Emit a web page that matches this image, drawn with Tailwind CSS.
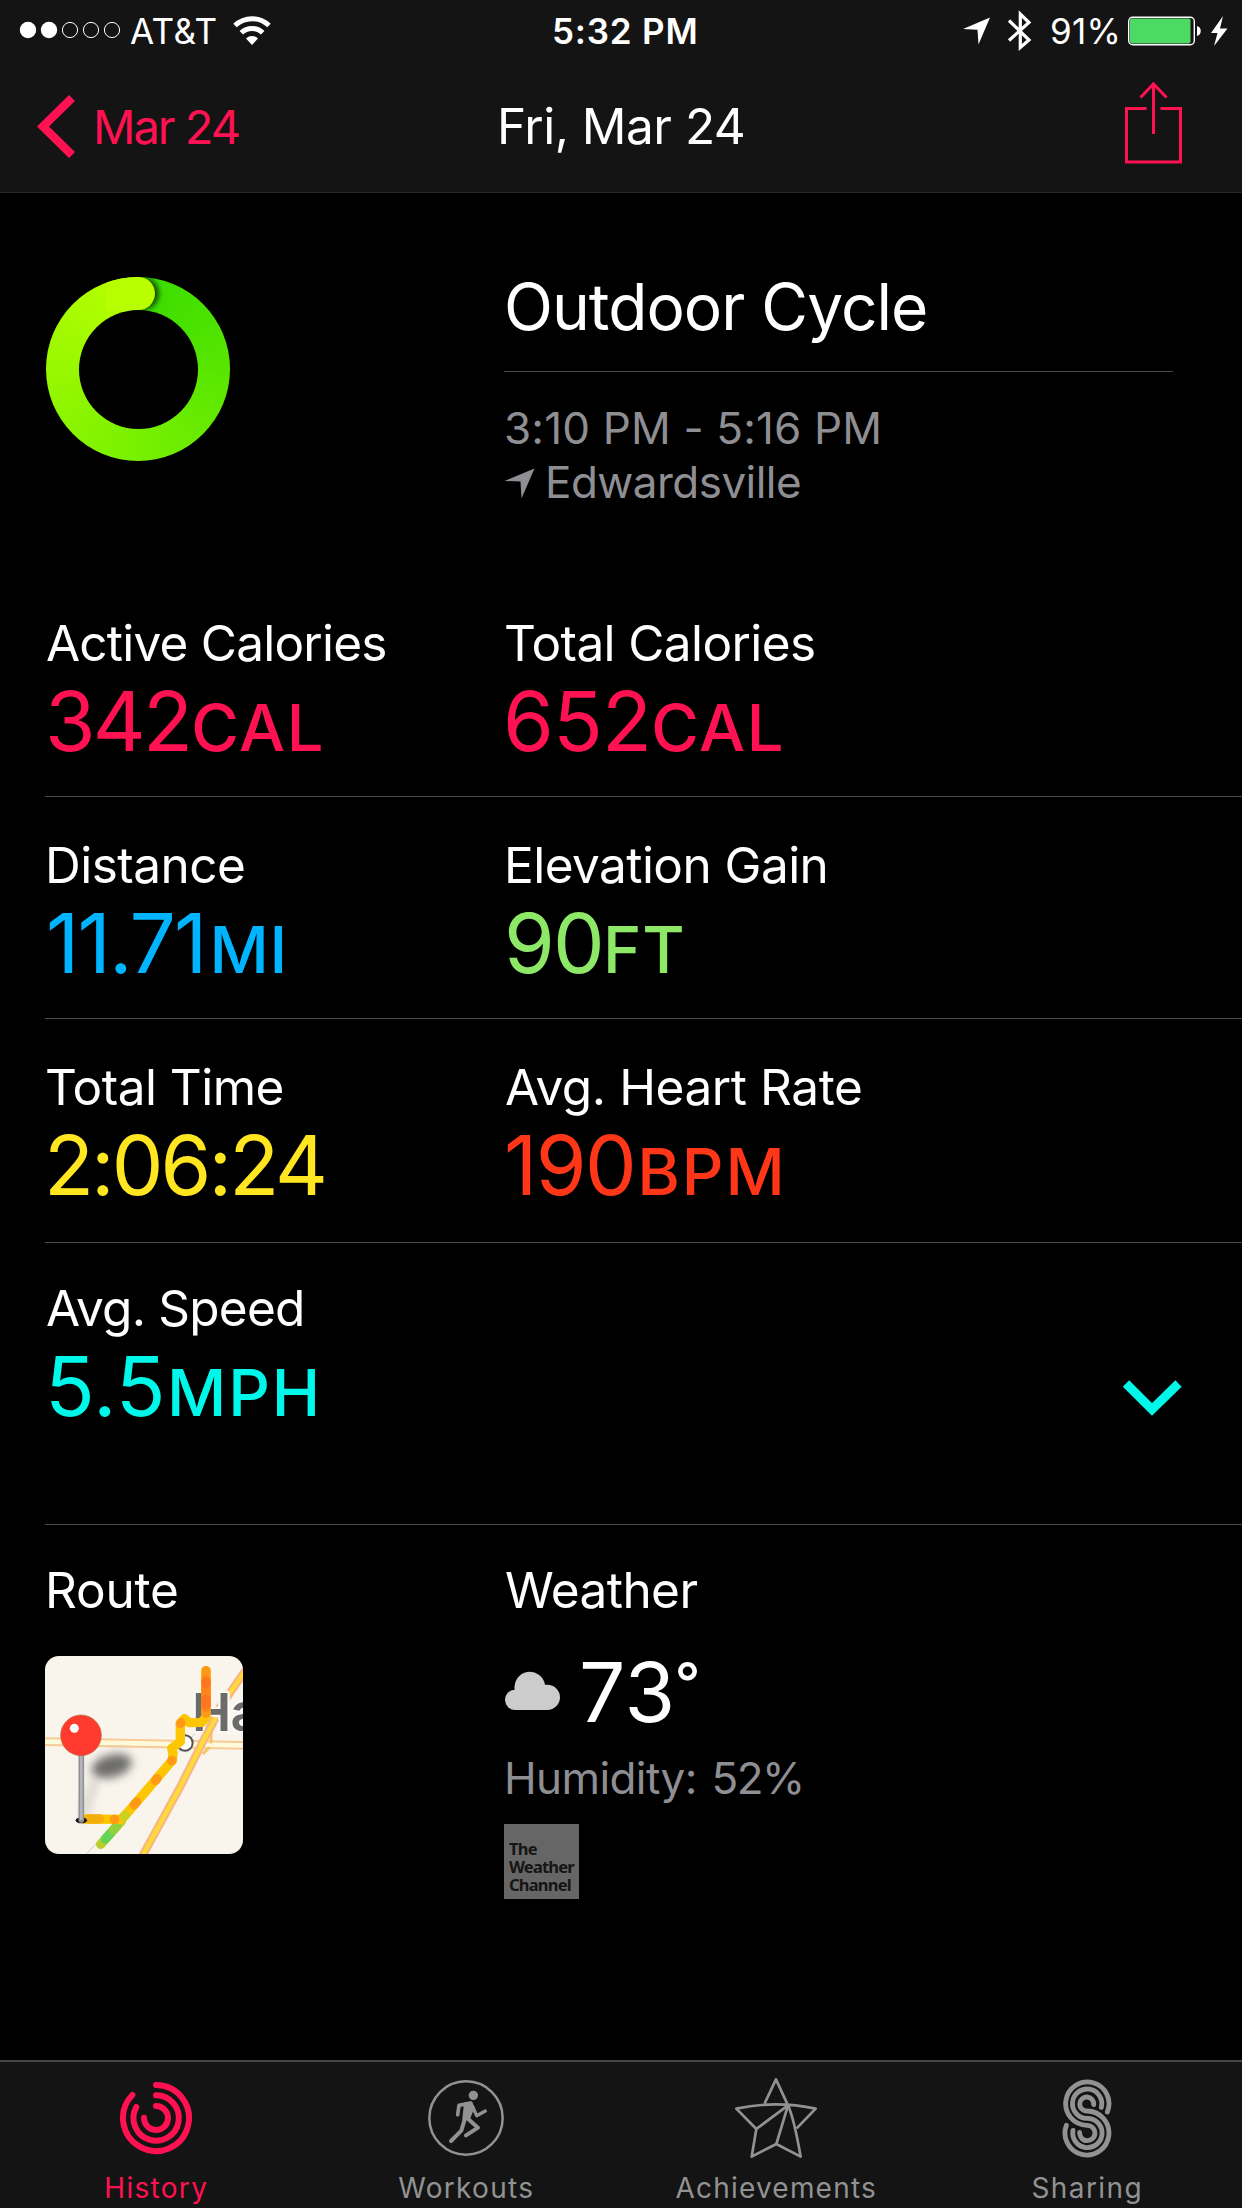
<!DOCTYPE html>
<html lang="en">
<head>
    <meta charset="UTF-8">
    <meta name="viewport" content="width=device-width, initial-scale=1.0">
    <title>Activity - Outdoor Cycle</title>
    <script src="https://cdn.jsdelivr.net/npm/@tailwindcss/browser@4"></script>
</head>
<body class="bg-black text-white font-['Inter',sans-serif] w-[1242px] h-[2208px] flex flex-col overflow-hidden">

    <!-- Header -->
    <header class="bg-[#141414] border-b border-[#2a2a2a] h-[193px] shrink-0">
        <div class="h-[62px] flex items-center text-[35px] leading-[62px]">
            <div class="w-[552px] flex items-center pl-[19px]">
                <svg class="w-[104px] h-[20px]" viewBox="0 0 104 20" fill="white">
                    <circle cx="9" cy="9" r="8.2"/>
                    <circle cx="30" cy="9" r="8.2"/>
                    <g fill="none" stroke="white" stroke-width="1">
                        <circle cx="51" cy="9" r="7.6"/>
                        <circle cx="72" cy="9" r="7.6"/>
                        <circle cx="93" cy="9" r="7.6"/>
                    </g>
                </svg>
                <span class="ml-[7px] tracking-[0.45px]">AT&amp;T</span>
                <svg class="ml-[15px] mb-[3px] w-[38px] h-[33px]" viewBox="0 0 38 33" fill="none" stroke="white" stroke-width="5">
                    <path d="M2 12.5a24.5 24.5 0 0 1 34 0"/>
                    <path d="M8.3 19.8a15.3 15.3 0 0 1 21.4 0"/>
                    <path d="M13 25.5a8.5 8.5 0 0 1 12 0L19 32z" fill="white" stroke="none"/>
                </svg>
            </div>
            <span class="w-[410px] font-semibold tracking-[0.8px]">5:32 PM</span>
            <svg class="w-[28px] h-[28px]" viewBox="0 0 28 28" fill="white"><path d="M28 0.5L16.5 27.5L15.5 12.8L1 12z"/></svg>
            <svg class="ml-[16px] w-[27px] h-[42px]" viewBox="0 0 27 42" fill="none" stroke="white" stroke-width="3.2"><path d="M3 10.5L23 30L14.3 37.5V4L23 12.5L3 30.5"/></svg>
            <span class="ml-[17px] tracking-[0.3px]">91%</span>
            <svg class="ml-[7px] w-[102px] h-[32px]" viewBox="0 0 102 32" fill="none">
                <rect x="0.7" y="2.2" width="65.6" height="27.6" rx="4" stroke="white" stroke-width="1.4"/>
                <rect x="2" y="3.5" width="60.5" height="25" rx="2" fill="#4cd964"/>
                <path d="M69 11c5 1 5 9 0 10z" fill="white"/>
                <path d="M95 1L83 18h6.500L86 31L99.500 13.500H92z" fill="white"/>
            </svg>
        </div>
        <div class="h-[130px] flex items-center pb-[3px]">
            <div class="w-[497px] flex items-center pl-[36px] text-[#ff1152]">
                <svg class="w-[41px] h-[64px]" viewBox="0 0 41 64" fill="none" stroke="#ff1152" stroke-width="8.500"><path d="M36 4L7 32.500L36 61"/></svg>
                <span class="ml-[16px] mt-[2px] text-[47px] leading-[60px] tracking-[-2px]">Mar 24</span>
            </div>
            <h1 class="w-[626px] text-[49.5px] leading-[60px] tracking-[-0.5px]">Fri, Mar 24</h1>
            <svg class="w-[61px] h-[96px]" viewBox="0 0 61 96" fill="none" stroke="#ff1152" stroke-width="3"><path d="M23.500 30.500H3.500v53.500h54v-53.500h-20M30.500 6v50M17.500 19.500l13-13.500l13 13.500"/></svg>
        </div>
    </header>

    <!-- Workout detail -->
    <main class="flex-1 flex flex-col">
        <section class="h-[382px] grid grid-cols-[459px_669px] pl-[45px]">
            <div class="pt-[84px] pl-px">
                <div class="relative w-[184px] h-[184px] rounded-full overflow-hidden bg-[conic-gradient(#38dc00,#78f000,#b9ff00)]">
                    <div class="absolute left-[76px] top-0 w-[33px] h-[33px] rounded-full bg-[#b9ff00] shadow-[4px_0_5px_rgba(0,0,0,0.65)]"></div>
                    <div class="absolute left-[60px] top-0 w-[32px] h-[33px] bg-[#b7ff00]"></div>
                    <div class="absolute left-[32.5px] top-[32.5px] w-[119px] h-[119px] rounded-full bg-black"></div>
                </div>
            </div>
            <div class="pt-[76px]">
                <h2 class="text-[64px] leading-[76px] tracking-[-0.97px] pb-[26px]">Outdoor Cycle</h2>
                <div class="border-t border-[#4a4a4a] pt-[29px] text-[44px] leading-[54px] text-[#8e8e93]">
                    <p class="tracking-[0.16px]">3:10 PM - 5:16 PM</p>
                    <p class="flex items-center tracking-[-0.53px]">
                        <svg class="mt-[2px] w-[31px] h-[31px] mr-[10px]" viewBox="0 0 31 31" fill="#8e8e93"><path d="M30.500 0.500L17.500 30.500L16.500 13.500L0.500 13z"/></svg>
                        Edwardsville
                    </p>
                </div>
            </div>
        </section>

        <div class="pl-[45px] text-[49.5px] leading-[60px]">
            <section class="h-[222px] border-b border-[#4a4a4a] grid grid-cols-[459px_1fr] pt-[38px]">
                <div>
                    <h3 class="ml-px tracking-[-0.78px]">Active Calories</h3>
                    <p class="mt-[7px] text-[82px] leading-[84px] text-[#ff1152] tracking-[-2.8px]">342<span class="ml-px text-[65px] font-medium leading-none tracking-[1.6px]">CAL</span></p>
                </div>
                <div>
                    <h3 class="tracking-[-0.6px]">Total Calories</h3>
                    <p class="mt-[7px] -ml-px text-[82px] leading-[84px] text-[#ff1152] tracking-[-0.85px]">652<span class="text-[65px] font-medium leading-none tracking-[1.6px]">CAL</span></p>
                </div>
            </section>
            <section class="h-[222px] border-b border-[#4a4a4a] grid grid-cols-[459px_1fr] pt-[38px]">
                <div>
                    <h3 class="tracking-[-0.51px]">Distance</h3>
                    <p class="mt-[7px] ml-px text-[82px] leading-[84px] text-[#00b4ff] tracking-[-1.9px]">11.71<span class="ml-[4px] text-[65px] font-medium leading-none tracking-[0.8px]">MI</span></p>
                </div>
                <div>
                    <h3 class="tracking-[-0.55px]">Elevation Gain</h3>
                    <p class="mt-[7px] text-[82px] leading-[84px] text-[#8ee868] tracking-[-1.85px]">90<span class="text-[65px] font-medium leading-none tracking-[1px]">FT</span></p>
                </div>
            </section>
            <section class="h-[224px] border-b border-[#4a4a4a] grid grid-cols-[459px_1fr] pt-[38px]">
                <div>
                    <h3 class="tracking-[-0.52px]">Total Time</h3>
                    <p class="mt-[7px] -ml-px text-[82px] leading-[84px] text-[#ffe620] tracking-[-2.93px]">2:06:24</p>
                </div>
                <div>
                    <h3 class="ml-px tracking-[-0.41px]">Avg. Heart Rate</h3>
                    <p class="mt-[7px] text-[82px] leading-[84px] text-[#ff3718] tracking-[-1.6px]">190<span class="ml-[2px] text-[65px] font-medium leading-none tracking-[2px]">BPM</span></p>
                </div>
            </section>
            <section class="h-[282px] border-b border-[#4a4a4a] flex justify-between pt-[35px]">
                <div>
                    <h3 class="ml-px tracking-[-0.77px]">Avg. Speed</h3>
                    <p class="mt-[7px] text-[82px] leading-[84px] text-[#00f8ea] tracking-[0.35px]">5.5<span class="ml-px text-[65px] font-medium leading-none tracking-[1.8px]">MPH</span></p>
                </div>
                <svg class="mt-[98px] mr-[58px] w-[64px] h-[42px]" viewBox="0 0 64 42" fill="none" stroke="#00f8ea" stroke-width="9"><path d="M6 7.500L32 33.500L58.500 7.500"/></svg>
            </section>

            <section class="grid grid-cols-[459px_1fr] pt-[35px]">
                <div>
                    <h3 class="tracking-[-0.2px]">Route</h3>
                    <svg class="mt-[36px] w-[198px] h-[198px] rounded-[14px]" viewBox="75 78 594 594" fill="none">
                        <defs>
                            <filter id="soft" x="-50%" y="-50%" width="200%" height="200%"><feGaussianBlur stdDeviation="15"/></filter>
                        </defs>
                        <rect x="75" y="78" width="594" height="594" fill="#f9f5ed"/>
                        <path d="M200 672L530 305L600 220" stroke="#bbb" stroke-width="2"/>
                        <!-- roads -->
                        <path d="M70 335L675 346" stroke="#f7ca96" stroke-width="26"/>
                        <path d="M70 335L675 346" stroke="#fdfadb" stroke-width="14"/>
                        <path d="M573 295v45M548 372l20-20" stroke="#f6c463" stroke-width="9"/>
                        <path d="M365 682L482 468L600 232L680 116" stroke="#f8b587" stroke-width="25"/>
                        <path d="M365 682L482 468L600 232L680 116" stroke="#ffdc34" stroke-width="12"/>
                        <circle cx="495" cy="339" r="23" fill="white" stroke="#555" stroke-width="6"/>
                        <text x="516" y="303" font-size="158" font-weight="600" fill="#6b6b6b" stroke="#fbf9f5" stroke-width="14" stroke-linejoin="round" paint-order="stroke" letter-spacing="-2">Ha</text>
                        <path d="M560 315L586 264" stroke="#f8b587" stroke-width="25"/>
                        <path d="M556 322L586 264" stroke="#ffdc34" stroke-width="12"/>
                        <!-- pin shadow -->
                        <ellipse cx="275" cy="408" rx="62" ry="34" fill="#555" fill-opacity="0.85" filter="url(#soft)" transform="rotate(-15 275 408)"/>
                        <path d="M188 565L225 450" stroke="#777" stroke-opacity="0.3" stroke-width="22" filter="url(#soft)"/>
                        <!-- recorded route -->
                        <g stroke-width="28" stroke-linecap="round" stroke-linejoin="round">
                            <path d="M242 643L305 572" stroke="#b9d02c"/>
                            <path d="M256 627L272 609" stroke="#62d558"/>
                            <path d="M280 600L290 589" stroke="#93d13c"/>
                            <path d="M190 567L303 568L325 545L457 391L459 370L455 355L481 335V280L493 266L507 278L545 277L558 262V122" stroke="#fcc603"/>
                            <path d="M312 560L316 556" stroke="#cfcf20"/>
                            <path d="M205 567H238" stroke="#f3ae0c"/>
                            <path d="M283 568h1M343 524l7-8M407 451l4-5M455 392l1-1" stroke="#ff9a14"/>
                            <path d="M481 281l2-3M558 250V122" stroke="#ff9a14"/>
                            <path d="M558 232V150" stroke="#ff8419"/>
                            <path d="M558 222v-14M558 160v-2" stroke="#ff7520"/>
                        </g>
                        <!-- pin -->
                        <ellipse cx="184" cy="571" rx="17" ry="9" fill="#111"/>
                        <path d="M184 370V570" stroke="#8f9094" stroke-width="17" stroke-linecap="round"/>
                        <path d="M184 370V570" stroke="#b3b4b7" stroke-width="8"/>
                        <circle cx="183" cy="316" r="61" fill="#ff3b2f" stroke="#b5643c" stroke-width="2"/>
                        <circle cx="163" cy="295" r="13.500" fill="white"/>
                    </svg>
                </div>
                <div>
                    <h3 class="ml-px tracking-[-0.55px]">Weather</h3>
                    <div class="mt-[31px] flex items-center h-[84px]">
                        <svg class="mb-[5px] ml-px w-[56px] h-[40px]" viewBox="75 390 168 120" fill="#cccccc"><path d="M107 507a30.500 30.500 0 0 1-3-61A46 46 0 0 1 195 431h7a38 38 0 0 1 0 76z"/></svg>
                        <p class="ml-[18px] text-[82px] leading-[84px] tracking-[0.46px]">73<sup class="-top-[19px] -ml-px text-[56px] font-medium leading-none">°</sup></p>
                    </div>
                    <p class="mt-[16px] text-[44px] leading-[54px] text-[#8e8e93] tracking-[-0.6px]">Humidity: <span class="ml-[3px] tracking-[-1.6px]">52%</span></p>
                    <div class="mt-[19px] w-[75px] h-[75px] bg-[#666666] pt-[16px] pl-[5px] font-['Noto_Sans',sans-serif] font-bold text-[16.5px] leading-[18px] tracking-[-0.8px] text-[#151515]">
                        <p>The</p>
                        <p>Weather</p>
                        <p>Channel</p>
                    </div>
                </div>
            </section>
        </div>
    </main>

    <!-- Tab bar -->
    <nav class="h-[148px] shrink-0 bg-[#141414] border-t-2 border-[#454545] grid grid-cols-4 text-[28px] leading-[34px] text-[#929292]">
        <a class="flex flex-col items-center pl-[2px] pt-[16px] text-[#ff1152] tracking-[1.3px]">
            <svg class="w-[80px] h-[80px]" viewBox="108 84 240 240" fill="none" stroke="#ff1152" stroke-width="18" stroke-linecap="round">
                <path d="M228 105A99 99 0 1 1 157 135"/>
                <path d="M228 136A68 68 0 1 1 169 171"/>
                <path d="M228 168A36 36 0 1 1 192 203"/>
            </svg>
            <span class="mt-[13px]">History</span>
        </a>
        <a class="flex flex-col items-center pl-px pt-[16px] tracking-[1.3px]">
            <svg class="w-[80px] h-[80px]" viewBox="1038 84 240 240" fill="none" stroke="#929292" stroke-width="12" stroke-linecap="round" stroke-linejoin="round">
                <circle cx="1158" cy="204" r="110" stroke-width="7.500"/>
                <circle cx="1180" cy="136" r="14" fill="#929292" stroke="none"/>
                <path d="M1133 194L1137 166L1172 159" stroke-width="11"/>
                <path d="M1156 160L1174 159L1178 176L1166 206L1151 206z" fill="#929292" stroke-width="8"/>
                <path d="M1177 168L1190 197L1216 183" stroke-width="10"/>
                <path d="M1155 205L1144 242L1113 273"/>
                <path d="M1162 205L1194 233L1158 256"/>
            </svg>
            <span class="mt-[13px]">Workouts</span>
        </a>
        <a class="flex flex-col items-center pt-[16px] tracking-[1.2px]">
            <svg class="w-[84px] h-[80px]" viewBox="282 84 252 240" fill="none" stroke="#929292" stroke-width="8" stroke-linejoin="round">
                <path d="M374 160L408 88L444 166Q462 205 482 320L409 282L335 320L349 237L289 176Q408 150 527 176L470 235"/>
                <path d="M349 237L444 166L409 282"/>
            </svg>
            <span class="mt-[13px]">Achievements</span>
        </a>
        <a class="flex flex-col items-center pl-px pt-[16px] tracking-[1.4px]">
            <svg class="w-[60px] h-[80px]" viewBox="1251 84 180 240" fill="none" stroke="#929292" stroke-width="14.500" stroke-linecap="round">
                <path d="M1402 186A65 65 0 1 0 1341 226A23 23 0 1 1 1319 247"/>
                <path d="M1384 172A44 44 0 1 0 1341 205A44 44 0 1 1 1299 241"/>
                <path d="M1361 164A21 21 0 1 0 1341 183A66 66 0 1 1 1279 226"/>
            </svg>
            <span class="mt-[13px]">Sharing</span>
        </a>
    </nav>
</body>
</html>
